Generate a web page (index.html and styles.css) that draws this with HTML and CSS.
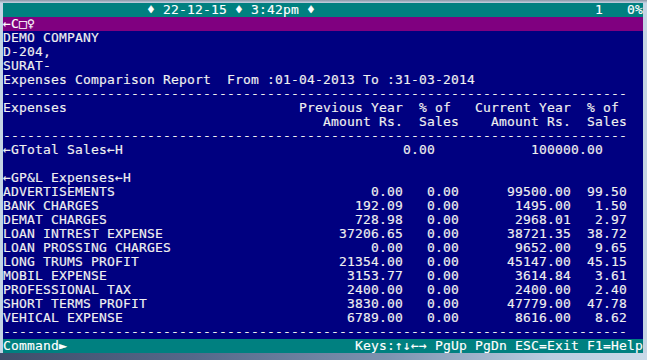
FILE: index.html
```html
<!DOCTYPE html>
<html>
<head>
<meta charset="utf-8">
<title>Expenses Comparison Report</title>
<link rel="stylesheet" href="styles.css">
</head>
<body>
<div class="frame">
  <div class="screen">
    <div class="row status">
      <span class="clock">♦ 22-12-15 ♦ 3:42pm ♦</span>
      <span class="pos">1   0%</span>
    </div>
    <div class="row title">←C□♀</div>
    <div class="row">DEMO COMPANY</div>
    <div class="row">D-204,</div>
    <div class="row">SURAT-</div>
    <div class="row">Expenses Comparison Report  From :01-04-2013 To :31-03-2014</div>
    <div class="row rule">------------------------------------------------------------------------------</div>
    <div class="grid head">
      <div class="cell name">Expenses</div>
      <div class="cell num">Previous Year<br>Amount Rs.</div>
      <div class="cell pct">% of<br>Sales</div>
      <div class="cell num">Current Year<br>Amount Rs.</div>
      <div class="cell pct">% of<br>Sales</div>
    </div>
    <div class="row rule">------------------------------------------------------------------------------</div>
    <div class="row total">
      <span class="name">←GTotal Sales←H</span>
      <span class="num">0.00</span>
      <span class="num">100000.00</span>
    </div>
    <div class="row"></div>
    <div class="row">←GP&amp;L Expenses←H</div>
    <div class="grid data">
      <div class="name">ADVERTISEMENTS</div><div class="num">0.00</div><div class="num">0.00</div><div class="num">99500.00</div><div class="num">99.50</div>
      <div class="name">BANK CHARGES</div><div class="num">192.09</div><div class="num">0.00</div><div class="num">1495.00</div><div class="num">1.50</div>
      <div class="name">DEMAT CHARGES</div><div class="num">728.98</div><div class="num">0.00</div><div class="num">2968.01</div><div class="num">2.97</div>
      <div class="name">LOAN INTREST EXPENSE</div><div class="num">37206.65</div><div class="num">0.00</div><div class="num">38721.35</div><div class="num">38.72</div>
      <div class="name">LOAN PROSSING CHARGES</div><div class="num">0.00</div><div class="num">0.00</div><div class="num">9652.00</div><div class="num">9.65</div>
      <div class="name">LONG TRUMS PROFIT</div><div class="num">21354.00</div><div class="num">0.00</div><div class="num">45147.00</div><div class="num">45.15</div>
      <div class="name">MOBIL EXPENSE</div><div class="num">3153.77</div><div class="num">0.00</div><div class="num">3614.84</div><div class="num">3.61</div>
      <div class="name">PROFESSIONAL TAX</div><div class="num">2400.00</div><div class="num">0.00</div><div class="num">2400.00</div><div class="num">2.40</div>
      <div class="name">SHORT TERMS PROFIT</div><div class="num">3830.00</div><div class="num">0.00</div><div class="num">47779.00</div><div class="num">47.78</div>
      <div class="name">VEHICAL EXPENSE</div><div class="num">6789.00</div><div class="num">0.00</div><div class="num">8616.00</div><div class="num">8.62</div>
    </div>
    <div class="row rule">------------------------------------------------------------------------------</div>
    <div class="row command">
      <span>Command►</span>
      <span>Keys:↑↓←→ PgUp PgDn ESC=Exit F1=Help</span>
    </div>
  </div>
  <div class="bottom"></div>
</div>
</body>
</html>
```

FILE: styles.css
```css
html, body {
  margin: 0;
  padding: 0;
}

body {
  width: 647px;
  height: 360px;
  overflow: hidden;
  background: #b7cde3;
}

.frame {
  display: flex;
  flex-direction: column;
  padding: 3px 4px 0 3px;
  height: 360px;
  box-sizing: border-box;
  background: linear-gradient(180deg, #8a97a6 0px, #c4d4e4 3px);
}

.screen {
  width: 640px;
  height: 350px;
  background: #000080;
  color: #f0f0f0;
  font-family: "DejaVu Sans Mono", "Liberation Mono", monospace;
  font-size: 13px;
  letter-spacing: 0.173px;
  line-height: 14px;
  -webkit-text-stroke: 0.15px currentColor;
  display: flex;
  flex-direction: column;
}

.bottom {
  height: 7px;
  margin: 0 -4px 0 -3px;
  background: linear-gradient(90deg, #3e4d6a 0%, #55688a 30%, #7d93b0 60%, #b9cde0 85%, #c9d9e8 100%);
}

.row {
  height: 14px;
  white-space: pre;
}

.status {
  background: #008080;
  color: #ffffff;
  display: flex;
  justify-content: space-between;
}

.clock {
  padding-left: 144px;
}

.title {
  background: #800080;
  color: #ffffff;
}

.grid {
  display: grid;
  grid-template-columns: 296px 104px 56px 112px 56px;
  grid-auto-rows: 14px;
  white-space: pre;
  width: 624px;
}

.head {
  grid-template-rows: 28px;
}

.num {
  text-align: right;
}

.pct {
  padding-left: 16px;
}

.total {
  display: grid;
  grid-template-columns: 296px 136px 168px;
}

.command {
  background: #008080;
  color: #ffffff;
  display: flex;
  justify-content: space-between;
}
```
